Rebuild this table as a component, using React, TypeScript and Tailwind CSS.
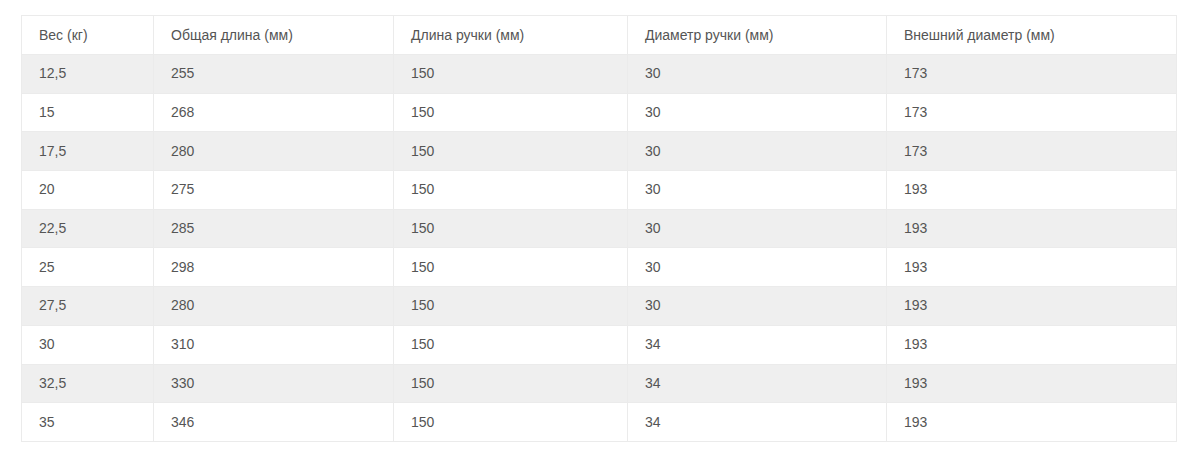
const headers = ['Вес (кг)', 'Общая длина (мм)', 'Длина ручки (мм)', 'Диаметр ручки (мм)', 'Внешний диаметр (мм)']

const rows = [
  ['12,5', '255', '150', '30', '173'],
  ['15', '268', '150', '30', '173'],
  ['17,5', '280', '150', '30', '173'],
  ['20', '275', '150', '30', '193'],
  ['22,5', '285', '150', '30', '193'],
  ['25', '298', '150', '30', '193'],
  ['27,5', '280', '150', '30', '193'],
  ['30', '310', '150', '34', '193'],
  ['32,5', '330', '150', '34', '193'],
  ['35', '346', '150', '34', '193'],
]

export default function App() {
  return (
    <div className="w-[1200px] h-[459px] bg-white pt-[15px] pl-[21px] font-['Liberation_Sans',Arial,sans-serif] text-[14px] text-[#555]">
      <table className="border-collapse table-fixed w-[1155px] border border-[#ebebeb]">
        <colgroup>
          <col className="w-[132px]" />
          <col className="w-[240px]" />
          <col className="w-[234px]" />
          <col className="w-[259px]" />
          <col className="w-[290px]" />
        </colgroup>
        <thead>
          <tr className="h-[39px]">
            {headers.map((h) => (
              <th key={h} className="border border-[#ebebeb] px-[17px] text-left font-normal align-middle">
                {h}
              </th>
            ))}
          </tr>
        </thead>
        <tbody>
          {rows.map((r, i) => (
            <tr key={i} className={i % 2 === 0 ? 'h-[38.7px] bg-[#efefef]' : 'h-[38.7px] bg-white'}>
              {r.map((c, j) => (
                <td key={j} className="border border-[#ebebeb] px-[17px] align-middle">
                  {c}
                </td>
              ))}
            </tr>
          ))}
        </tbody>
      </table>
    </div>
  )
}
